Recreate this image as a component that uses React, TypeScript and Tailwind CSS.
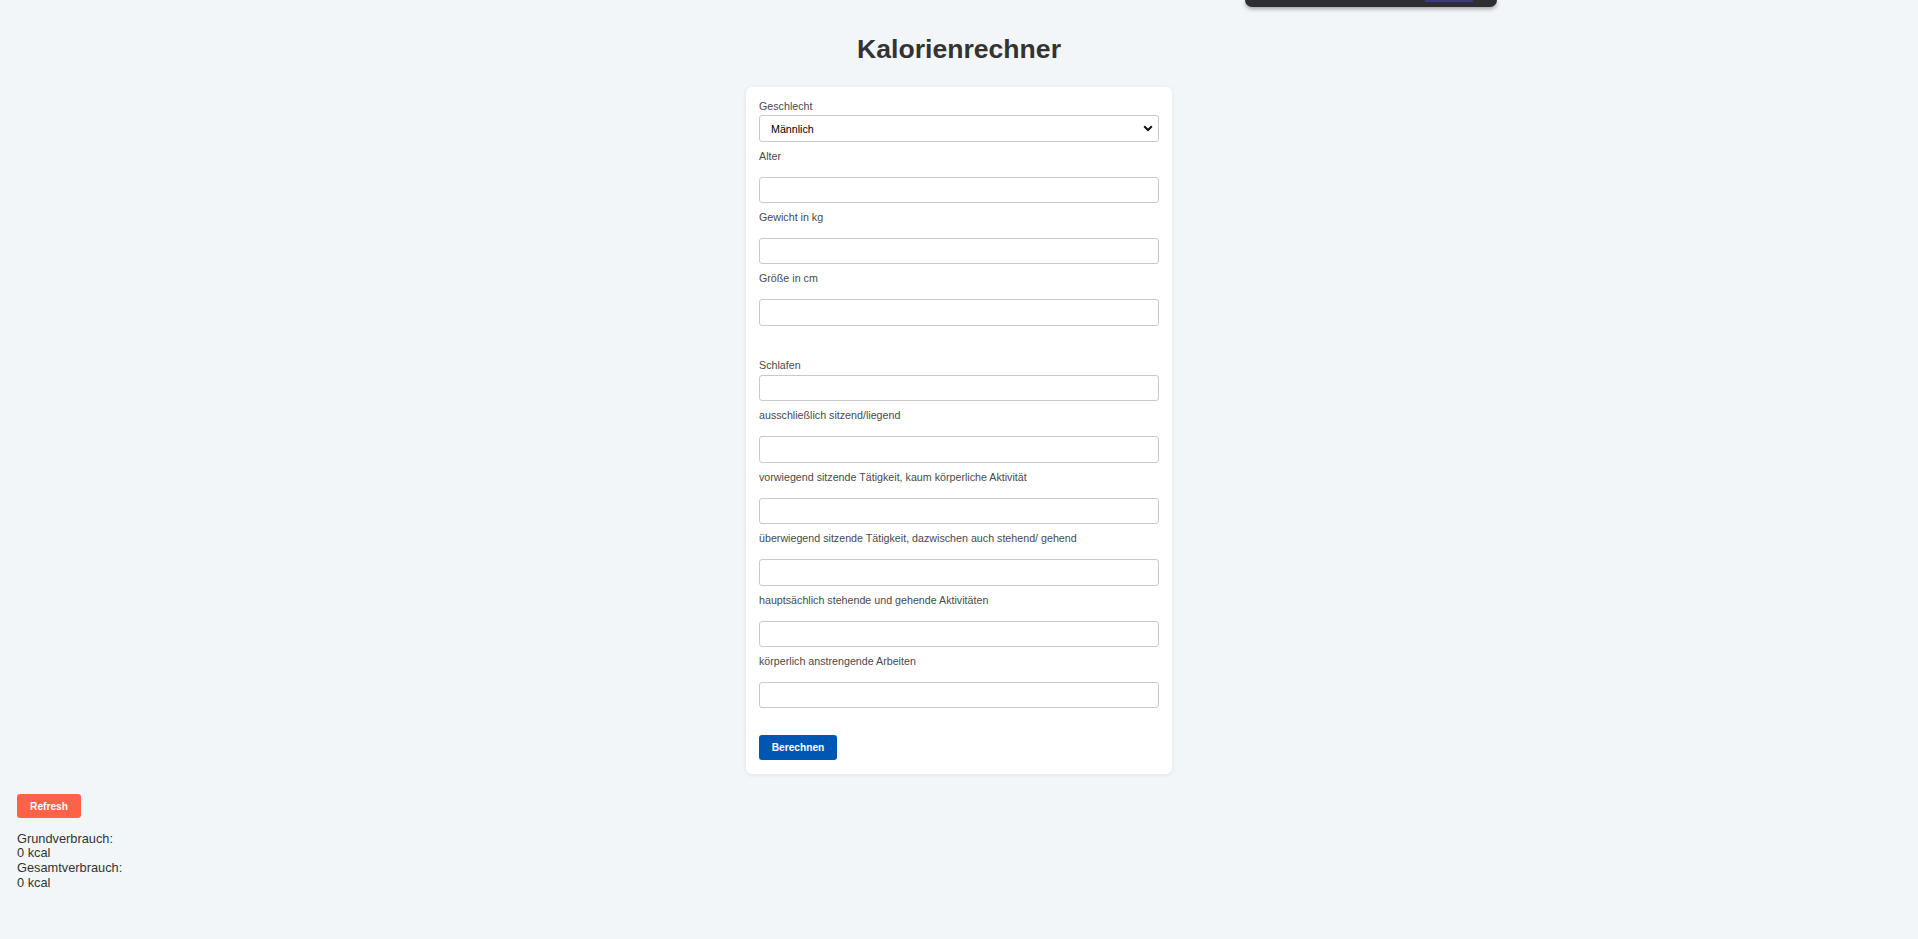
import { useState } from "react";

const fields = [
  "Alter",
  "Gewicht in kg",
  "Größe in cm",
];

const activities = [
  "ausschließlich sitzend/liegend",
  "vorwiegend sitzende Tätigkeit, kaum körperliche Aktivität",
  "überwiegend sitzende Tätigkeit, dazwischen auch stehend/ gehend",
  "hauptsächlich stehende und gehende Aktivitäten",
  "körperlich anstrengende Arbeiten",
];

function Field({ label }: { label: string }) {
  return (
    <div>
      <label className="block mt-[8px] leading-[12px] text-[10.7px] text-[#4a4a4a]">{label}</label>
      <input
        type="text"
        className="block mt-[15px] h-[26.4px] w-full border border-[#c9c9c9] rounded-[3px] bg-white px-2 text-[10.7px] outline-none"
      />
    </div>
  );
}

export default function App() {
  const [gender, setGender] = useState("m");

  return (
    <div className="relative min-h-[939px] bg-[#f3f6f9] font-['Liberation_Sans',Arial,sans-serif] text-[#333]">
      {/* toolbar popup cut off at the top edge */}
      <div className="absolute top-0 left-[1245px] w-[252px] h-[7px] bg-[#2e2d33] rounded-b-[9px] shadow-[0_2px_4px_rgba(0,0,0,0.35)]">
        <div className="absolute top-0 left-[180px] w-[48px] h-[1.5px] bg-[#3c3a7c]" />
      </div>

      <div className="pt-[34px]">
        <h1 className="text-center text-[26.6px] leading-[31px] font-bold text-[#333]">Kalorienrechner</h1>

        <div className="mx-auto mt-[22px] w-[426px] bg-white rounded-[6px] shadow-[0_1px_5px_rgba(0,0,0,0.08)] px-[13px] pt-[13px] pb-[14px]">
          <label className="block leading-[12px] text-[10.7px] text-[#4a4a4a]">Geschlecht</label>
          <div className="relative mt-[3px]">
            <select
              value={gender}
              onChange={(e) => setGender(e.target.value)}
              className="block h-[26.5px] w-full appearance-none border border-[#c9c9c9] rounded-[3px] bg-white pl-[11px] pt-[1px] text-[10.7px] text-black outline-none"
            >
              <option value="m">Männlich</option>
              <option value="w">Weiblich</option>
            </select>
            <svg className="pointer-events-none absolute right-[6px] top-[10px]" width="10" height="7" viewBox="0 0 10 7">
              <path d="M1.2 1.3 L5 5 L8.8 1.3" fill="none" stroke="#111" strokeWidth="2" />
            </svg>
          </div>

          {fields.map((f) => (
            <Field key={f} label={f} />
          ))}

          <label className="block mt-[33px] leading-[12px] text-[10.7px] text-[#4a4a4a]">Schlafen</label>
          <input
            type="text"
            className="block mt-[4.3px] h-[26.4px] w-full border border-[#c9c9c9] rounded-[3px] bg-white px-2 text-[10.7px] outline-none"
          />

          {activities.map((a) => (
            <Field key={a} label={a} />
          ))}

          <button className="mt-[27px] h-[24.7px] w-[78px] bg-[#0056b3] text-white font-bold text-[10.2px] rounded-[3px]">
            Berechnen
          </button>
        </div>
      </div>

      <div className="px-[17px] mt-[18.5px]">
        <button className="h-[24px] w-[64px] bg-[#ff6347] text-white font-bold text-[10.2px] rounded-[3px]">Refresh</button>
        <div className="mt-[13.5px] text-[12.8px] leading-[14.7px] text-[#333]">
          <div>Grundverbrauch:</div>
          <div>0 kcal</div>
          <div>Gesamtverbrauch:</div>
          <div>0 kcal</div>
        </div>
      </div>
    </div>
  );
}
